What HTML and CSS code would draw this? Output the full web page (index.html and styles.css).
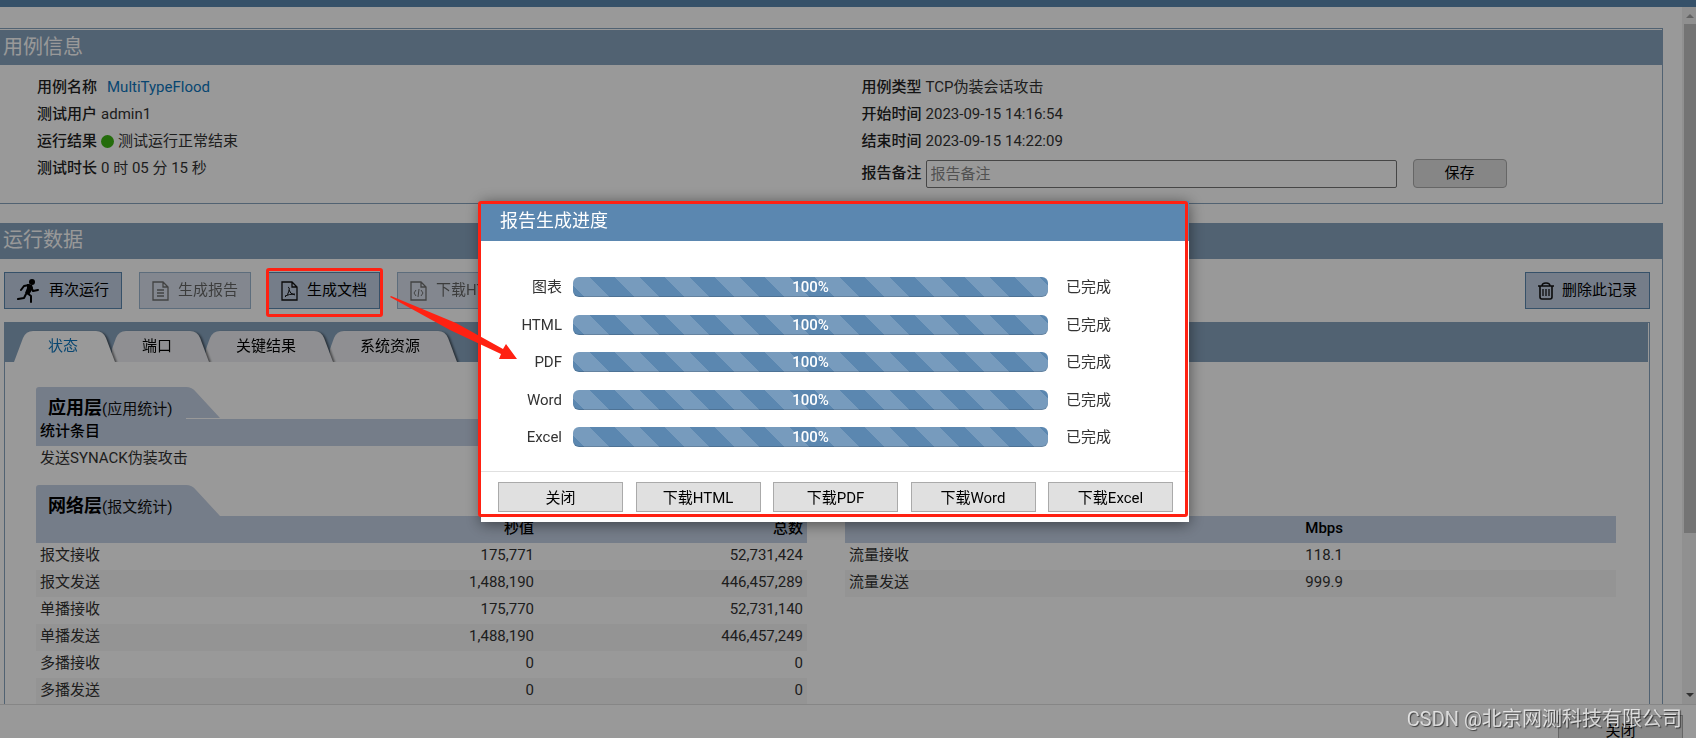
FILE: index.html
```html
<!DOCTYPE html>
<html lang="zh-CN">
<head>
<meta charset="utf-8">
<title>报告生成进度</title>
<link rel="stylesheet" href="styles.css">
</head>
<body>
<div class="topbar"></div>
<div class="viewport">
  <main class="content">
    <section class="panel panel-info">
      <h2 class="panel-title">用例信息</h2>
      <div class="info">
        <dl class="info-col">
          <div class="info-row"><dt>用例名称</dt><dd><a class="case-link" href="#">MultiTypeFlood</a></dd></div>
          <div class="info-row"><dt>测试用户</dt><dd>admin1</dd></div>
          <div class="info-row"><dt>运行结果</dt><dd class="result"><span class="dot"></span>测试运行正常结束</dd></div>
          <div class="info-row"><dt>测试时长</dt><dd>0 时 05 分 15 秒</dd></div>
        </dl>
        <div class="info-col">
          <div class="info-row"><b>用例类型</b><span>TCP伪装会话攻击</span></div>
          <div class="info-row"><b>开始时间</b><span>2023-09-15 14:16:54</span></div>
          <div class="info-row"><b>结束时间</b><span>2023-09-15 14:22:09</span></div>
          <div class="info-row note-row"><label for="note">报告备注</label><input id="note" class="note" type="text" placeholder="报告备注"><button class="save" type="button">保存</button></div>
        </div>
      </div>
    </section>

    <section class="panel panel-run">
      <h2 class="panel-title run-title">运行数据</h2>
      <div class="toolbar">
        <button class="tool" type="button">
          <svg viewBox="0 0 24 26" width="24" height="26" aria-hidden="true"><circle cx="15" cy="4" r="3"/><path d="M12 7 7 8 4 12M14 9l2 4 5-1M10 15l4 3v6M9 16l-2 4-6 1" fill="none" stroke="#000" stroke-width="2" stroke-linecap="round" stroke-linejoin="round"/><path d="M10 6l5 1 1 3-4 7-4-2 2-5z"/></svg>再次运行</button>
        <button class="tool" type="button" disabled>
          <svg viewBox="0 0 18 20" width="18" height="20" aria-hidden="true"><path class="ln" d="M1 1h10l5 5v13H1zM11 1v5h5M5 9h7M5 12h7M5 15h7"/></svg>生成报告</button>
        <button class="tool" type="button">
          <svg viewBox="0 0 18 20" width="18" height="20" aria-hidden="true"><path class="ln" d="M1 1h10l5 5v13H1zM11 1v5h5"/><path class="ln thin" d="M7 6q2 0 1 4-1 4-4 6M8 9q1 4 6 5M4 15q4-2 10-2"/></svg>生成文档</button>
        <button class="tool" type="button" disabled>
          <svg viewBox="0 0 18 20" width="18" height="20" aria-hidden="true"><path class="ln" d="M1 1h10l5 5v13H1zM11 1v5h5"/><path class="ln thin" d="M6 9l-2 3 2 3M11 9l2 3-2 3M9 8l-1 8"/></svg>下载HTML</button>
        <button class="tool tool-delete" type="button">
          <svg viewBox="0 0 16 18" width="16" height="18" aria-hidden="true"><path class="ln bold" d="M0 4h16M4 4c0-4 8-4 8 0M2 4v11q0 2 2 2h8q2 0 2-2V4"/><path class="ln" d="M5 7v7M8 7v7M11 7v7"/></svg>删除此记录</button>
      </div>
      <div class="tabbox">
        <div class="tabs" role="tablist">
          <button class="tab tab-1" type="button" role="tab" aria-selected="true"><svg viewBox="0 0 101 31" preserveAspectRatio="none"><path d="M0 31 9 7Q12 0 19 0H82Q89 0 92 7L101 31z"/></svg><span>状态</span></button>
          <button class="tab tab-2" type="button" role="tab"><svg viewBox="0 0 98 31" preserveAspectRatio="none"><path d="M0 31V18L4 7Q7 0 14 0H79Q86 0 89 7L98 31z"/></svg><span>端口</span></button>
          <button class="tab tab-3" type="button" role="tab"><svg viewBox="0 0 128 31" preserveAspectRatio="none"><path d="M0 31V18L4 7Q7 0 14 0H109Q116 0 119 7L128 31z"/></svg><span>关键结果</span></button>
          <button class="tab tab-4" type="button" role="tab"><svg viewBox="0 0 128 31" preserveAspectRatio="none"><path d="M0 31V18L4 7Q7 0 14 0H109Q116 0 119 7L128 31z"/></svg><span>系统资源</span></button>
        </div>
        <div class="stats">
          <section class="group">
            <h3 class="group-title"><svg viewBox="0 0 184 32" width="184" height="32"><path d="M0 32V3Q0 0 3 0H150Q156 0 160 5L184 31H150V32z"/></svg><span><strong>应用层</strong>(应用统计)</span></h3>
            <div class="tables">
              <table class="grid">
                <thead><tr><th class="first">统计条目</th></tr></thead>
                <tbody><tr><td>发送SYNACK伪装攻击</td></tr></tbody>
              </table>
            </div>
          </section>
          <section class="group">
            <h3 class="group-title title-flush"><svg viewBox="0 0 184 31" width="184" height="31"><path d="M0 31V3Q0 0 3 0H150Q156 0 160 5L184 31z"/></svg><span><strong>网络层</strong>(报文统计)</span></h3>
            <div class="tables">
              <table class="grid">
                <thead><tr><th class="name"></th><th>秒值</th><th class="last">总数</th></tr></thead>
                <tbody>
                  <tr><td>报文接收</td><td>175,771</td><td>52,731,424</td></tr>
                  <tr><td>报文发送</td><td>1,488,190</td><td>446,457,289</td></tr>
                  <tr><td>单播接收</td><td>175,770</td><td>52,731,140</td></tr>
                  <tr><td>单播发送</td><td>1,488,190</td><td>446,457,249</td></tr>
                  <tr><td>多播接收</td><td>0</td><td>0</td></tr>
                  <tr><td>多播发送</td><td>0</td><td>0</td></tr>
                </tbody>
              </table>
              <table class="grid">
                <thead><tr><th class="name"></th><th>Mbps</th><th class="last"></th></tr></thead>
                <tbody>
                  <tr><td>流量接收</td><td>118.1</td><td></td></tr>
                  <tr><td>流量发送</td><td>999.9</td><td></td></tr>
                </tbody>
              </table>
            </div>
          </section>
        </div>
      </div>
    </section>
  </main>
  <div class="scrollbar" aria-hidden="true"><i class="arrow up"></i><i class="thumb"></i><i class="arrow down"></i></div>
</div>
<footer class="footer"><button class="btn" type="button">关闭</button></footer>

<div class="overlay">
  <div class="modal" role="dialog" aria-labelledby="modal-title">
    <h1 class="modal-title" id="modal-title">报告生成进度</h1>
    <div class="progress-list">
      <div class="progress-row"><span class="kind">图表</span><div class="bar">100%</div><span>已完成</span></div>
      <div class="progress-row"><span class="kind">HTML</span><div class="bar">100%</div><span>已完成</span></div>
      <div class="progress-row"><span class="kind">PDF</span><div class="bar">100%</div><span>已完成</span></div>
      <div class="progress-row"><span class="kind">Word</span><div class="bar">100%</div><span>已完成</span></div>
      <div class="progress-row"><span class="kind">Excel</span><div class="bar">100%</div><span>已完成</span></div>
    </div>
    <div class="actions">
      <button class="btn" type="button">关闭</button>
      <button class="btn" type="button">下载HTML</button>
      <button class="btn" type="button">下载PDF</button>
      <button class="btn" type="button">下载Word</button>
      <button class="btn" type="button">下载Excel</button>
    </div>
    <div class="mark mark-modal"></div>
  </div>
</div>
<div class="mark mark-button"></div>
<svg class="pointer" viewBox="0 0 128 66" width="128" height="66" aria-hidden="true"><path d="M1 0 66 27 113 53 116 48 127 63 109 63 111 58 60 34 0 1z"/></svg>
<div class="watermark">CSDN @北京网测科技有限公司</div>
</body>
</html>
```
FILE: styles.css
```css
* { box-sizing: border-box; }

body {
  margin: 0;
  height: 100vh;
  display: flex;
  flex-direction: column;
  overflow: hidden;
  background: #fff;
  color: #333;
  font: 15px/27px Roboto, "Noto Sans CJK SC", sans-serif;
  font-weight: 400;
}

h1, h2, h3, dl, dd { margin: 0; font-weight: 400; }
button, input { font: inherit; color: #000; }
button { padding: 0; cursor: pointer; }

.topbar { height: 7px; flex: none; background: #5b87b0; }

.viewport { flex: 1; min-height: 0; display: flex; }
.content { flex: 1; min-width: 0; overflow: hidden; padding: 21px 19px 0 0; }

.panel { border: 1px solid #87a3be; border-left: 0; }
.panel-info { padding-top: 1px; margin-bottom: 19px; }
.panel-run { border-top: 0; min-height: 700px; }
.panel-title {
  height: 35px;
  padding-left: 3px;
  background: #87a3be;
  color: #fff;
  font-size: 20px;
  line-height: 35px;
}
.run-title { height: 36px; }

.info { display: grid; grid-template-columns: 1fr 1fr; column-gap: 24px; padding: 9px 0 11px 37px; }
.info-row { display: flex; align-items: center; gap: 4px; height: 27px; }
.info-row dt, .info-row b, .info-row label { font-weight: 500; color: #222; }
.case-link { margin-left: 6px; color: #0e76bd; text-decoration: none; }
.result { display: flex; align-items: center; gap: 4px; }
.dot { width: 13px; height: 13px; border-radius: 50%; background: #3cb413; }
.note-row { height: 37px; }
.note {
  flex: 1;
  max-width: 471px;
  height: 28px;
  padding: 0 4px;
  border: 1px solid #767676;
  border-radius: 2px;
  background: #fff;
}
.note::placeholder { color: #888; }
.save {
  width: 94px;
  height: 29px;
  margin-left: 12px;
  border: 1px solid #aaa;
  border-radius: 4px;
  background: #e0e0e0;
}

.toolbar { display: flex; gap: 17px; padding: 13px 12px 13px 4px; }
.tool {
  display: flex;
  align-items: center;
  gap: 8px;
  height: 37px;
  padding: 0 12px;
  border: 1px solid #5b87b0;
  background: #c3d0e4;
  line-height: 35px;
}
.tool:disabled { opacity: .6; color: #000; }
.tool-delete { margin-left: auto; }
.ln { fill: none; stroke: #111; stroke-width: 1.3; }
.bold { stroke-width: 1.6; }
.thin { stroke-width: 1; }

.tabbox { margin: 0 12px 0 4px; border: 1px solid #87a3be; min-height: 600px; }
.tabs { display: flex; height: 39px; padding: 8px 0 0 9px; margin-right: 1px; background: #87a3be; }
.tab {
  position: relative;
  height: 31px;
  margin-right: -3px;
  padding: 0 37px 0 30px;
  border: 0;
  background: none;
  filter: drop-shadow(2px 1px 1px rgba(0, 0, 0, .55));
}
.tab svg { position: absolute; inset: 0; width: 100%; height: 100%; fill: #eeeff3; }
.tab span { position: relative; }
.tab-1 { z-index: 4; padding-left: 34px; color: #0e76bd; }
.tab-1 svg { fill: #fff; }
.tab-2 { z-index: 3; }
.tab-3 { z-index: 2; }
.tab-4 { z-index: 1; }
.stats { position: relative; z-index: 5; background: #fff; padding: 25px 33px 0 31px; }

.group { margin-bottom: 12px; }
.group-title {
  position: relative;
  height: 32px;
  padding: 7px 0 0 12px;
  color: #111;
  font-size: 15px;
  line-height: 27px;
}
.title-flush { height: 31px; }
.group-title svg { position: absolute; left: 0; top: 0; fill: #c3d0e4; }
.group-title span { position: relative; }
.group-title strong { font-size: 18px; font-weight: 700; color: #000; }

.tables { display: grid; grid-template-columns: 1fr 1fr; gap: 38px; align-items: start; }
.grid { width: 100%; border-collapse: collapse; table-layout: fixed; }
.grid th, .grid td { height: 27px; padding: 0 4px; text-align: right; vertical-align: top; line-height: 25px; }
.grid th { background: #c3d0e4; color: #000; font-weight: 500; }
.grid td:first-child, .grid .first { text-align: left; }
.grid .name { width: 32%; }
.grid .last { width: 269px; }
.grid tbody tr:nth-child(even) { background: #f7f7f7; }

.scrollbar {
  width: 14px;
  flex: none;
  display: flex;
  flex-direction: column;
  align-items: flex-end;
  background: #f1f1f1;
}
.arrow { margin: 0 2px; border: 4px solid transparent; }
.up { margin-top: 3px; margin-bottom: 6px; border-bottom-color: #a3a3a3; }
.down { margin-top: auto; margin-bottom: 3px; border-top-color: #505050; }
.thumb { width: 12px; height: 73%; background: #c1c1c1; }

.footer {
  display: flex;
  justify-content: flex-end;
  flex: none;
  height: 34px;
  padding: 10px 13px 0 0;
  border-top: 1px solid #e0e0e0;
}
.btn {
  flex: none;
  width: 125px;
  height: 30px;
  border: 1px solid #aaa;
  background: #e0e0e0;
  line-height: 31px;
}

.overlay {
  position: fixed;
  inset: 0;
  z-index: 10;
  display: flex;
  align-items: center;
  justify-content: center;
  padding: 0 26px 15px 0;
  background: rgba(0, 0, 0, .4);
}
.modal {
  position: relative;
  width: 708px;
  background: #fff;
  box-shadow: 0 2px 14px rgba(0, 0, 0, .5);
}
.modal-title {
  height: 40px;
  padding-left: 19px;
  background: #5b87b0;
  color: #fff;
  font-size: 18px;
  line-height: 39px;
}
.progress-list {
  display: grid;
  align-content: space-between;
  height: 230px;
  padding: 36px 60px 24px 0;
}
.progress-row {
  display: grid;
  grid-template-columns: 81px 475px 1fr;
  column-gap: 11px;
  align-items: center;
  height: 20px;
}
.progress-row > span { line-height: 20px; }
.progress-row .kind { text-align: right; }
.progress-row > span:last-child { padding-left: 7px; }
.bar {
  height: 20px;
  border-radius: 6px;
  background: linear-gradient(45deg, rgba(255, 255, 255, .17) 25%, transparent 25%, transparent 50%, rgba(255, 255, 255, .17) 50%, rgba(255, 255, 255, .17) 75%, transparent 75%) -8px 0 / 50px 50px #5b87b0;
  box-shadow: inset 0 -1px 0 rgba(0, 0, 0, .15);
  color: #fff;
  font-weight: 500;
  line-height: 20px;
  text-align: center;
}
.actions {
  display: flex;
  justify-content: space-between;
  padding: 10px 16px 10px 17px;
  border-top: 1px solid #e0e0e0;
}

.mark { position: absolute; border: 3px solid #ff2112; border-radius: 3px; pointer-events: none; }
.mark-modal { inset: 0 1px 5px -3px; }
.mark-button { z-index: 11; left: 266px; top: 268px; width: 117px; height: 49px; }
.pointer { position: absolute; z-index: 12; left: 390px; top: 296px; fill: #ff2112; }
.watermark {
  position: absolute;
  z-index: 12;
  right: 14px;
  bottom: 5px;
  color: rgba(255, 255, 255, .75);
  font-size: 20px;
  text-shadow: 1px 1px 1px rgba(0, 0, 0, .6);
}
```
